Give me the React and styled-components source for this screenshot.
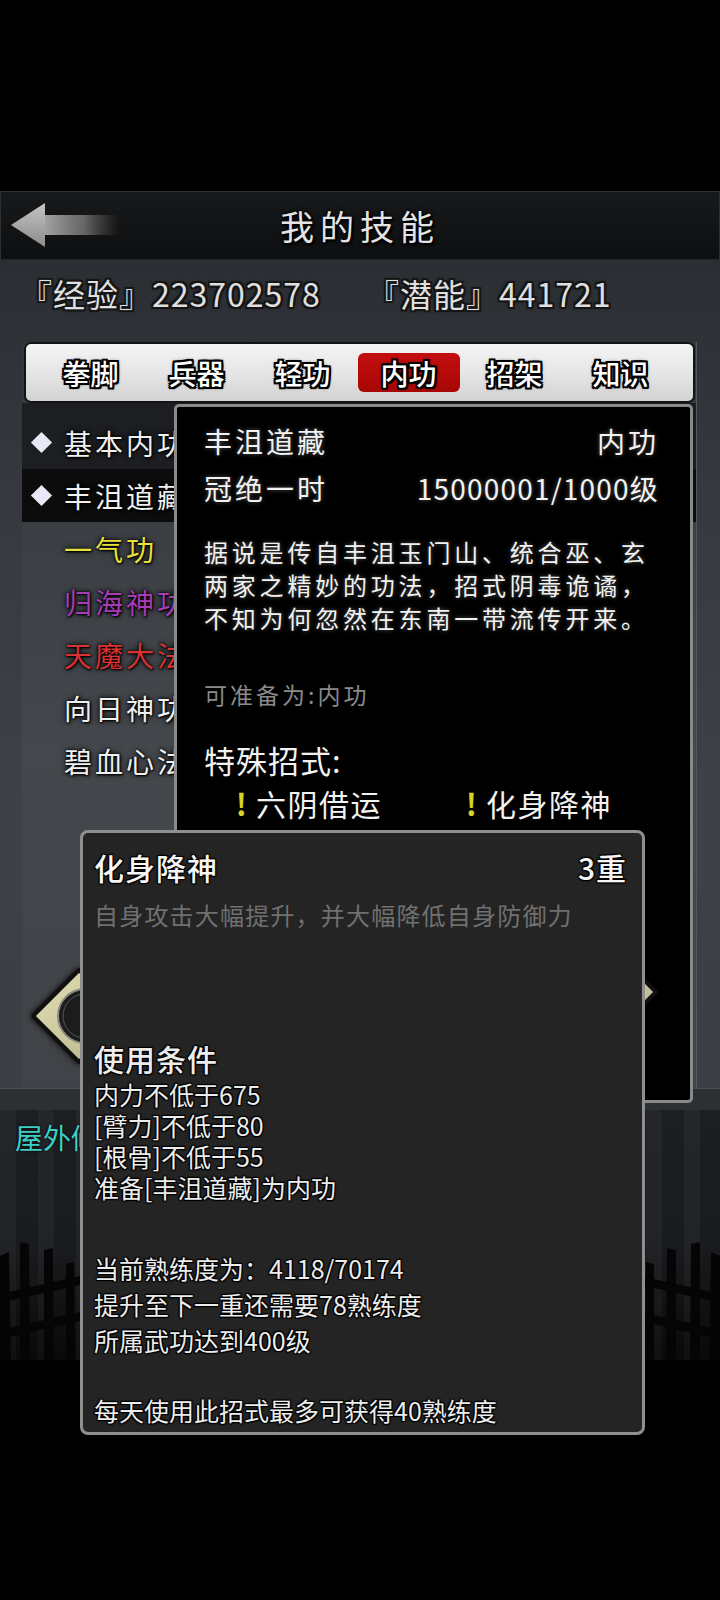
import styled, { createGlobalStyle } from "styled-components";

const GlobalStyle = createGlobalStyle`
  body {
    margin: 0;
    background: #000;
    font-family: "Noto Sans CJK SC", "Noto Sans", sans-serif;
  }
  * { box-sizing: border-box; }
`;

const tabs = ["拳脚", "兵器", "轻功", "内功", "招架", "知识"];

const skills = [
  { name: "基本内功", color: "#f0f0f0", mark: true, bg: "#1d1e21", top: 13 },
  { name: "丰沮道藏", color: "#f0f0f0", mark: true, bg: "#0c0c0d" },
  { name: "一气功", color: "#e6e23a" },
  { name: "归海神功", color: "#a63cb6" },
  { name: "天魔大法", color: "#d83232" },
  { name: "向日神功", color: "#f0f0f0" },
  { name: "碧血心法", color: "#f0f0f0" },
];

const descLines = [
  "据说是传自丰沮玉门山、统合巫、玄",
  "两家之精妙的功法，招式阴毒诡谲，",
  "不知为何忽然在东南一带流传开来。",
];

const conditions = ["内力不低于675", "[臂力]不低于80", "[根骨]不低于55", "准备[丰沮道藏]为内功"];
const progress = ["当前熟练度为：4118/70174", "提升至下一重还需要78熟练度", "所属武功达到400级"];

const outline = (w, c = "#000") =>
  `-${w}px -${w}px 0 ${c}, ${w}px -${w}px 0 ${c}, -${w}px ${w}px 0 ${c}, ${w}px ${w}px 0 ${c}, 0 ${w}px 0 ${c}, 0 -${w}px 0 ${c}, ${w}px 0 0 ${c}, -${w}px 0 0 ${c}, 0 0 4px ${c}`;

function BackArrow() {
  return (
    <svg width="108" height="46" viewBox="0 0 108 46">
      <defs>
        <linearGradient id="shaft" x1="0" x2="1" y1="0" y2="0">
          <stop offset="0" stopColor="#a8a8a8" />
          <stop offset="0.55" stopColor="#8a8a8a" stopOpacity="0.7" />
          <stop offset="1" stopColor="#6a6a6a" stopOpacity="0" />
        </linearGradient>
        <linearGradient id="head" x1="0" x2="0" y1="0" y2="1">
          <stop offset="0" stopColor="#c4c4c4" />
          <stop offset="1" stopColor="#8c8c8c" />
        </linearGradient>
      </defs>
      <rect x="30" y="12" width="78" height="20" fill="url(#shaft)" />
      <polygon points="0,22 34,0 34,44" fill="url(#head)" />
    </svg>
  );
}

function Fence({ flip }) {
  return (
    <svg width="80" height="118" viewBox="0 0 80 118" style={flip ? { transform: "scaleX(-1)" } : undefined}>
      <polygon points="0,14 9,10 11,118 0,118" fill="#050505" />
      <polygon points="20,0 29,2 30,118 20,118" fill="#050505" />
      <polygon points="44,8 53,6 54,118 44,118" fill="#050505" />
      <polygon points="66,22 74,20 75,118 66,118" fill="#050505" />
      <polygon points="0,52 80,34 80,43 0,61" fill="#050505" />
      <polygon points="0,88 80,70 80,79 0,97" fill="#050505" />
    </svg>
  );
}

// seal button behind the move card; only its outer edges show
function Diamond({ seal }) {
  return (
    <svg width="96" height="96" viewBox="0 0 96 96">
      <defs>
        <linearGradient id={seal ? "dl" : "dr"} x1="0" x2="1" y1="0" y2="1">
          <stop offset="0" stopColor="#e6e2b4" />
          <stop offset="1" stopColor="#b4b08a" />
        </linearGradient>
      </defs>
      <polygon
        points="2,48 48,2 94,48 48,94"
        fill={`url(#${seal ? "dl" : "dr"})`}
        stroke="#101010"
        strokeWidth="4"
      />
      {seal && (
        <>
          <circle cx="54" cy="48" r="27" fill="#1c1c1c" stroke="#8a8a80" strokeWidth="2" />
          <circle cx="54" cy="48" r="22" fill="none" stroke="#555" strokeWidth="1" />
          <text x="58" y="42" fill="#d8d8d8" fontSize="18" textAnchor="middle" fontFamily="Noto Sans CJK SC">设</text>
          <text x="58" y="64" fill="#d8d8d8" fontSize="18" textAnchor="middle" fontFamily="Noto Sans CJK SC">教</text>
        </>
      )}
    </svg>
  );
}

export default function App() {
  return (
    <Page>
      <GlobalStyle />
      <TopSpace />
      <Header>
        <BackCell><BackArrow /></BackCell>
        <Title>我的技能</Title>
        <span />
      </Header>

      <Panel>
        <Stats>
          <Stat>『经验』223702578</Stat>
          <Stat>『潜能』441721</Stat>
        </Stats>
        <Board>
          <TabBar>
            {tabs.map(t => (
              <Tab key={t} $active={t === "内功"}>{t}</Tab>
            ))}
          </TabBar>
          <List>
            {skills.map(s => (
              <Row key={s.name} $bg={s.bg} $top={s.top}>
                {s.mark ? <Mark /> : <MarkSpace />}
                <RowName $color={s.color}>{s.name}</RowName>
              </Row>
            ))}
          </List>
        </Board>
      </Panel>
      <Band />
      <Scene>
        <SceneLabel>屋外修炼</SceneLabel>
        <FenceRow>
          <Fence />
          <Fence flip />
        </FenceRow>
      </Scene>

      <DetailPopup>
        <DetailHead>
          <span>丰沮道藏</span>
          <span>内功</span>
        </DetailHead>
        <DetailHead>
          <span>冠绝一时</span>
          <Level>15000001/1000级</Level>
        </DetailHead>
        <Desc>
          {descLines.map(l => (
            <div key={l}>{l}</div>
          ))}
        </Desc>
        <Prepare>可准备为:内功</Prepare>
        <MovesTitle>特殊招式:</MovesTitle>
        <Moves>
          <Move><Bang>!</Bang>六阴借运</Move>
          <Move><Bang>!</Bang>化身降神</Move>
        </Moves>
      </DetailPopup>

      <Flank>
        <DiamondSlot $dy={24}><Diamond seal /></DiamondSlot>
        <DiamondSlot $dy={0}><Diamond /></DiamondSlot>
      </Flank>

      <SkillPopup>
        <SkillHead>
          <span>化身降神</span>
          <span>3重</span>
        </SkillHead>
        <SkillSub>自身攻击大幅提升，并大幅降低自身防御力</SkillSub>
        <CondTitle>使用条件</CondTitle>
        <Lines $lh={31}>
          {conditions.map(c => (
            <div key={c}>{c}</div>
          ))}
        </Lines>
        <Lines $lh={36} $gap={47}>
          {progress.map(c => (
            <div key={c}>{c}</div>
          ))}
        </Lines>
        <Lines $lh={36} $gap={34}>
          <div>每天使用此招式最多可获得40熟练度</div>
        </Lines>
      </SkillPopup>
    </Page>
  );
}

const Page = styled.div`
  position: relative;
  width: 720px;
  min-height: 1600px;
  background: #000;
  overflow: hidden;
`;

const TopSpace = styled.div`
  height: 191px;
`;

const Header = styled.header`
  height: 69px;
  display: grid;
  grid-template-columns: 1fr auto 1fr;
  align-items: center;
  background: linear-gradient(#18191b, #0e0f10);
  border: 1px solid #2e2f31;
  border-bottom-color: #262729;
`;

const BackCell = styled.div`
  padding-left: 10px;
  display: flex;
  align-items: center;
`;

const Title = styled.h1`
  margin: 0;
  font-size: 34px;
  font-weight: 400;
  letter-spacing: 6px;
  color: #e4e4e4;
  text-shadow: 0 0 2px #000, 0 0 5px #000, 2px 2px 2px #000;
`;

const Panel = styled.section`
  height: 828px;
  padding-top: 13px;
  background: linear-gradient(180deg, #2b2f34 0%, #363a3f 30%, #3e4247 65%, #3b3e42 100%);
`;

const Stats = styled.div`
  display: flex;
  padding-left: 20px;
  height: 69px;
`;

const Stat = styled.div`
  width: 347px;
  font-size: 32px;
  line-height: 40px;
  letter-spacing: 1px;
  color: #e0e0e0;
  text-shadow: ${outline(2, "#151515")};
`;

const Board = styled.div`
  margin: 0 23px 0 22px;
  height: 746px;
  background: linear-gradient(180deg, #34383d 0%, #44474c 55%, #404347 100%);
  border-right: 1px solid #55585c;
`;

const TabBar = styled.nav`
  margin: 0 1px 0 2px;
  height: 61px;
  display: flex;
  align-items: center;
  justify-content: center;
  gap: 4px;
  padding-right: 8px;
  border: 2px solid #141414;
  border-radius: 7px;
  background: linear-gradient(180deg, #f4f4f4 0%, #e6e6e6 50%, #d2d2d2 100%);
`;

const Tab = styled.div`
  width: 102px;
  height: 39px;
  display: flex;
  align-items: center;
  justify-content: center;
  border-radius: 6px;
  background: ${p => (p.$active ? "linear-gradient(#c40e0e, #a80606)" : "transparent")};
  font-size: 28px;
  font-weight: 500;
  color: #fff;
  text-shadow: ${outline(2)};
`;

const List = styled.ul`
  list-style: none;
  margin: 0;
  padding: 0;
`;

const Row = styled.li`
  height: ${p => 53 + (p.$top || 0)}px;
  padding-top: ${p => p.$top || 0}px;
  display: flex;
  align-items: center;
  background: ${p => p.$bg || "transparent"};
`;

const Mark = styled.span`
  width: 15px;
  height: 15px;
  margin: 0 15px 0 12px;
  background: #e8e8f6;
  transform: rotate(45deg);
`;

const MarkSpace = styled.span`
  width: 42px;
`;

const RowName = styled.span`
  font-size: 28px;
  letter-spacing: 3px;
  color: ${p => p.$color};
  text-shadow: 0 0 3px #000, 0 0 6px #000, 1px 1px 2px #000;
`;

const Band = styled.div`
  height: 22px;
  background: #2d3033;
  border-top: 1px solid #4a4d51;
`;

const Scene = styled.section`
  height: 250px;
  display: flex;
  flex-direction: column;
  justify-content: space-between;
  background:
    repeating-linear-gradient(90deg, rgba(255, 255, 255, 0.025) 0 16px, rgba(0, 0, 0, 0.1) 16px 38px),
    linear-gradient(180deg, #1f2124 0%, #1c1e21 55%, #0a0a0b 100%);
`;

const SceneLabel = styled.div`
  padding: 10px 0 0 15px;
  font-size: 28px;
  line-height: 34px;
  color: #3dcfc6;
  text-shadow: 0 0 3px #000;
`;

const FenceRow = styled.div`
  display: flex;
  justify-content: space-between;
`;

const DetailPopup = styled.div`
  position: absolute;
  left: 174px;
  top: 404px;
  width: 519px;
  height: 699px;
  padding: 10px 31px 0 27px;
  background: #000;
  border: 3px solid #8a8a8a;
  border-radius: 5px;
  color: #f2f2f2;
  text-shadow: 0 0 4px rgba(255, 255, 255, 0.35);
`;

const DetailHead = styled.div`
  display: flex;
  justify-content: space-between;
  height: 47px;
  align-items: center;
  font-size: 28px;
  letter-spacing: 3px;
`;

const Level = styled.span`
  letter-spacing: 1.2px;
`;

const Desc = styled.div`
  margin-top: 24px;
  font-size: 24px;
  line-height: 33px;
  letter-spacing: 3.8px;
  white-space: nowrap;
`;

const Prepare = styled.div`
  margin-top: 44px;
  font-size: 23px;
  line-height: 33px;
  letter-spacing: 3px;
  color: #8a8a8a;
  text-shadow: none;
`;

const MovesTitle = styled.div`
  margin-top: 29px;
  font-size: 31px;
  line-height: 40px;
  letter-spacing: 1px;
  text-shadow: none;
`;

const Moves = styled.div`
  display: flex;
  margin-top: 3px;
  padding-left: 29px;
`;

const Move = styled.div`
  flex: none;
  width: 230px;
  display: flex;
  align-items: center;
  font-size: 30px;
  line-height: 40px;
  letter-spacing: 1.5px;
  text-shadow: none;
  white-space: nowrap;
`;

const Bang = styled.span`
  display: inline-block;
  width: 18px;
  margin-right: 5px;
  text-align: center;
  font-weight: 700;
  color: #d6d22a;
`;

const Flank = styled.div`
  position: absolute;
  left: 31px;
  top: 944px;
  width: 627px;
  display: flex;
  justify-content: space-between;
  align-items: flex-start;
`;

const DiamondSlot = styled.div`
  margin-top: ${p => p.$dy}px;
  display: flex;
  filter: drop-shadow(0 0 3px #000);
`;

const SkillPopup = styled.div`
  position: absolute;
  left: 80px;
  top: 830px;
  width: 565px;
  padding: 12px 15px 4px 11px;
  background: #242424;
  border: 3px solid #8f8f8f;
  border-radius: 8px;
  color: #ececec;
  text-shadow: 0 0 2px #000, 1px 1px 1px #000, -1px -1px 1px #000, 1px -1px 1px #000, -1px 1px 1px #000;
`;

const SkillHead = styled.div`
  display: flex;
  justify-content: space-between;
  height: 44px;
  align-items: center;
  font-size: 30px;
  font-weight: 500;
  letter-spacing: 1px;
  color: #f6f6f6;
`;

const SkillSub = styled.div`
  margin-top: 9px;
  font-size: 24px;
  line-height: 34px;
  letter-spacing: 1.2px;
  color: #707070;
  text-shadow: none;
`;

const CondTitle = styled.div`
  margin-top: 106px;
  font-size: 30px;
  font-weight: 500;
  line-height: 40px;
  letter-spacing: 1px;
`;

const Lines = styled.div`
  margin-top: ${p => p.$gap || 1}px;
  font-size: 25px;
  line-height: ${p => p.$lh}px;
  white-space: nowrap;
`;
